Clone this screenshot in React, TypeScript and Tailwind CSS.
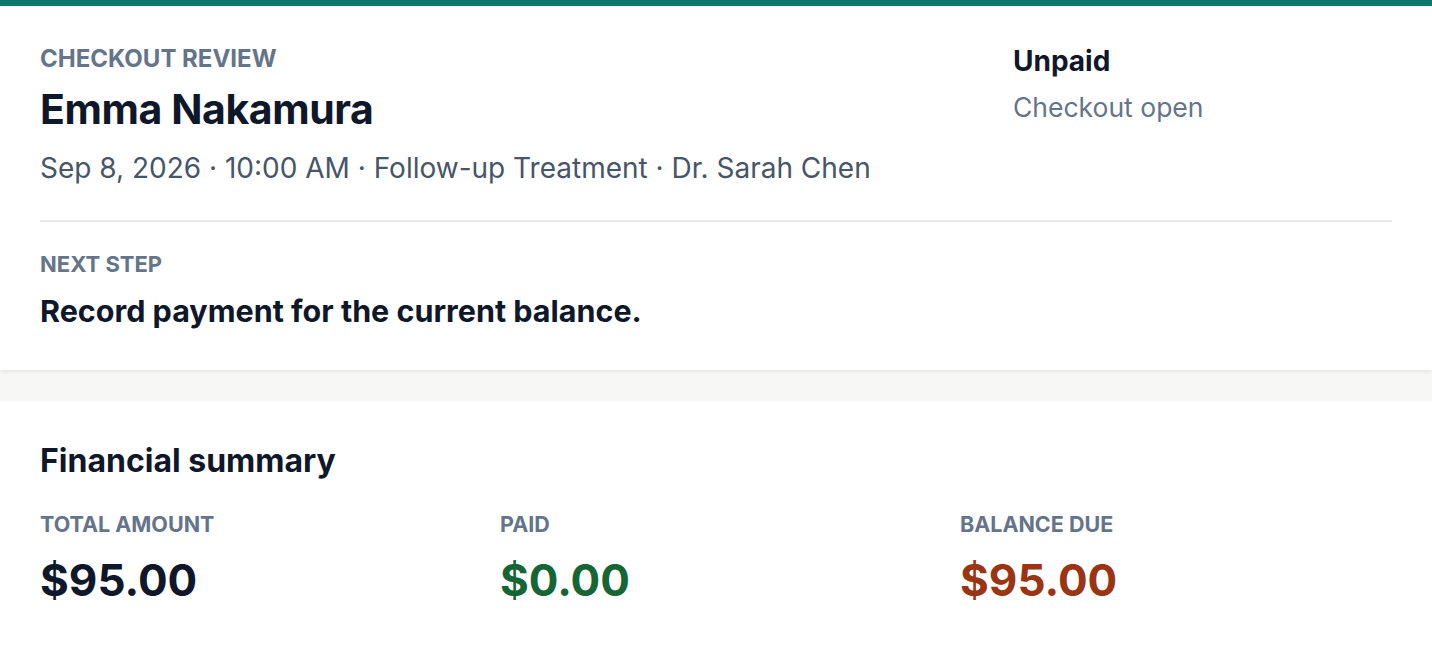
import React from "react";

export default function App() {
  const font = { fontFamily: "Inter, 'Noto Sans', sans-serif" };
  return (
    <div style={font} className="flex min-h-[648px] w-full flex-col bg-[#f7f8f6]">
      <div className="h-[6px] bg-[#0f766e]" />
      <div className="bg-white px-[40px] pt-[38px] pb-[40px] shadow-[0_2px_3px_rgba(0,0,0,0.06)]">
        <div className="flex items-start justify-between border-b-2 border-[#e5e7eb] pb-[34px]">
          <div className="flex flex-col">
            <div className="text-[24px] leading-[30px] font-bold uppercase text-[#64748b]">
              Checkout review
            </div>
            <div className="mt-[10px] text-[41px] leading-[50px] font-bold tracking-[-0.01em] text-[#0f172a]">
              Emma Nakamura
            </div>
            <div className="mt-[15.5px] text-[28px] leading-[36px] text-[#475569]">
              Sep 8, 2026 · 10:00 AM · Follow-up Treatment · Dr. Sarah Chen
            </div>
          </div>
          <div className="flex w-[379px] flex-col">
            <div className="text-[28px] leading-[34px] font-bold text-[#0f172a]">Unpaid</div>
            <div className="mt-[11px] text-[26.5px] leading-[36px] text-[#64748b]">Checkout open</div>
          </div>
        </div>
        <div className="pt-[27px]">
          <div className="text-[22px] leading-[30px] font-bold uppercase text-[#64748b]">Next step</div>
          <div className="mt-[13px] text-[30.5px] leading-[38px] font-bold text-[#0f172a]">
            Record payment for the current balance.
          </div>
        </div>
      </div>
      <div className="h-[31px] shrink-0" />
      <div className="flex-1 bg-white px-[40px] pt-[40px] pb-[40px]">
        <div className="text-[32px] leading-[40px] font-bold text-[#0f172a]">Financial summary</div>
        <div className="mt-[28px] grid grid-cols-3 gap-[28px]">
          {[
            { label: "Total amount", value: "$95.00", color: "text-[#0f172a]" },
            { label: "Paid", value: "$0.00", color: "text-[#166534]" },
            { label: "Balance due", value: "$95.00", color: "text-[#9a3412]" },
          ].map((c) => (
            <div key={c.label} className="flex flex-col">
              <div className="text-[21.5px] leading-[30px] font-bold uppercase text-[#64748b]">{c.label}</div>
              <div className={`mt-[13px] text-[44px] leading-[56px] font-bold ${c.color}`}>{c.value}</div>
            </div>
          ))}
        </div>
      </div>
    </div>
  );
}
